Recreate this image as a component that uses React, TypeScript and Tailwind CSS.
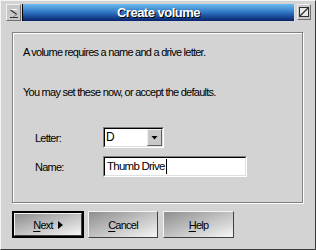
export default function App() {
  return (
    <div className="w-[316px] h-[250px] bg-[#d3d3d3] border border-t-[#f4f4f4] border-l-[#f4f4f4] border-r-[#3c3c3c] border-b-[#3c3c3c] flex flex-col font-['Liberation_Sans',Arial,sans-serif] text-[11px] tracking-[-0.75px] text-black leading-[14px] select-none">
      {/* title bar */}
      <div className="flex items-stretch h-[17px] mt-[3px] pl-[5px] pr-[4px]">
        <div className="w-[15px] h-[17px] bg-[#c8c8c8] border border-t-[#f0f0f0] border-l-[#f0f0f0] border-r-[#707070] border-b-[#707070] flex items-center justify-center">
          <svg width="13" height="15" viewBox="0 0 13 15">
            <path d="M3 4.5 L10 4.5" stroke="#f8f8f8" strokeWidth="1" />
            <path d="M3.5 5 L10 9.5" stroke="#303030" strokeWidth="1.2" fill="none" />
            <path d="M10 9.5 L6 12" stroke="#909090" strokeWidth="1" fill="none" />
            <path d="M3 12.5 L11 12.5" stroke="#303030" strokeWidth="1" />
          </svg>
        </div>
        <div className="flex-1 ml-[1px] border-l border-l-black border-r border-r-[#e0e0e0] bg-gradient-to-b from-[#6cbcef] via-[#2f74c2] to-[#0b216c] flex items-center justify-center">
          <span className="text-white font-bold text-[13px] tracking-[-0.5px] [text-shadow:1px_1px_0_#000]">Create volume</span>
        </div>
        <div className="w-[14px] h-[16px] ml-[2px] bg-[#c8c8c8] border border-t-[#f0f0f0] border-l-[#f0f0f0] border-r-[#707070] border-b-[#707070] flex items-center justify-center">
          <svg width="12" height="12" viewBox="0 0 12 12">
            <rect x="1.5" y="1.5" width="9" height="9" fill="#e8e8e8" stroke="#303030" strokeWidth="1" />
            <path d="M2 10 L10 2" stroke="#303030" strokeWidth="1.2" />
          </svg>
        </div>
      </div>

      {/* content panel */}
      <div className="ml-[11px] mt-[11px] w-[291px] h-[171px] border border-[#808080] shadow-[1px_1px_0_#fff,inset_1px_1px_0_#fff] pl-[10px] pt-[12px]">
        <p>A volume requires a name and a drive letter.</p>
        <p className="mt-[26px]">You may set these now, or accept the defaults.</p>

        <div className="mt-[28px] ml-[12px] grid grid-cols-[68px_auto] gap-y-[8px] items-center">
          <span>Letter:</span>
          <div className="w-[61px] h-[21px] flex border border-t-[#808080] border-l-[#808080] border-r-white border-b-white">
            <div className="flex-1 flex border border-t-black border-l-black border-r-[#e0e0e0] border-b-[#e0e0e0] bg-white">
              <span className="flex-1 pl-[1px] leading-[17px] text-[12px]">D</span>
              <div className="w-[15px] bg-[#c8c8c8] border border-t-[#f0f0f0] border-l-[#f0f0f0] border-r-[#606060] border-b-[#606060] flex items-center justify-center">
                <svg width="7" height="6" viewBox="0 0 7 6">
                  <path d="M0.5 1 L6.5 1 L3.5 4.5 Z" fill="#000" />
                </svg>
              </div>
            </div>
          </div>

          <span>Name:</span>
          <div className="w-[144px] h-[21px] flex border border-t-[#808080] border-l-[#808080] border-r-white border-b-white">
            <div className="flex-1 flex items-center border border-t-black border-l-black border-r-[#e0e0e0] border-b-[#e0e0e0] bg-white pl-[2px]">
              <span className="text-[11.5px] leading-[17px]">Thumb Drive</span>
              <span className="ml-[1px] w-[1px] h-[15px] bg-black" />
            </div>
          </div>
        </div>
      </div>

      {/* buttons */}
      <div className="flex items-start ml-[11px] mt-[8px]">
        <div className="w-[72px] h-[27px] border-2 border-black flex">
          <div className="flex-1 flex items-center justify-center gap-[5px] border border-t-[#f4f4f4] border-l-[#f4f4f4] border-r-[#404040] border-b-[#404040] bg-gradient-to-br from-[#8f8f8f] to-[#f6f6f6]">
            <span><span className="underline underline-offset-2">N</span>ext</span>
            <svg width="5" height="8" viewBox="0 0 5 8">
              <path d="M0 0 L5 4 L0 8 Z" fill="#000" />
            </svg>
          </div>
        </div>
        <div className="ml-[4px] w-[70px] h-[27px] flex items-center justify-center border border-t-[#f4f4f4] border-l-[#f4f4f4] border-r-[#404040] border-b-[#404040] bg-gradient-to-br from-[#8f8f8f] to-[#f6f6f6]">
          <span><span className="underline underline-offset-2">C</span>ancel</span>
        </div>
        <div className="ml-[5px] w-[71px] h-[27px] flex items-center justify-center border border-t-[#f4f4f4] border-l-[#f4f4f4] border-r-[#404040] border-b-[#404040] bg-gradient-to-br from-[#8f8f8f] to-[#f6f6f6]">
          <span><span className="underline underline-offset-2">H</span>elp</span>
        </div>
      </div>
    </div>
  );
}
